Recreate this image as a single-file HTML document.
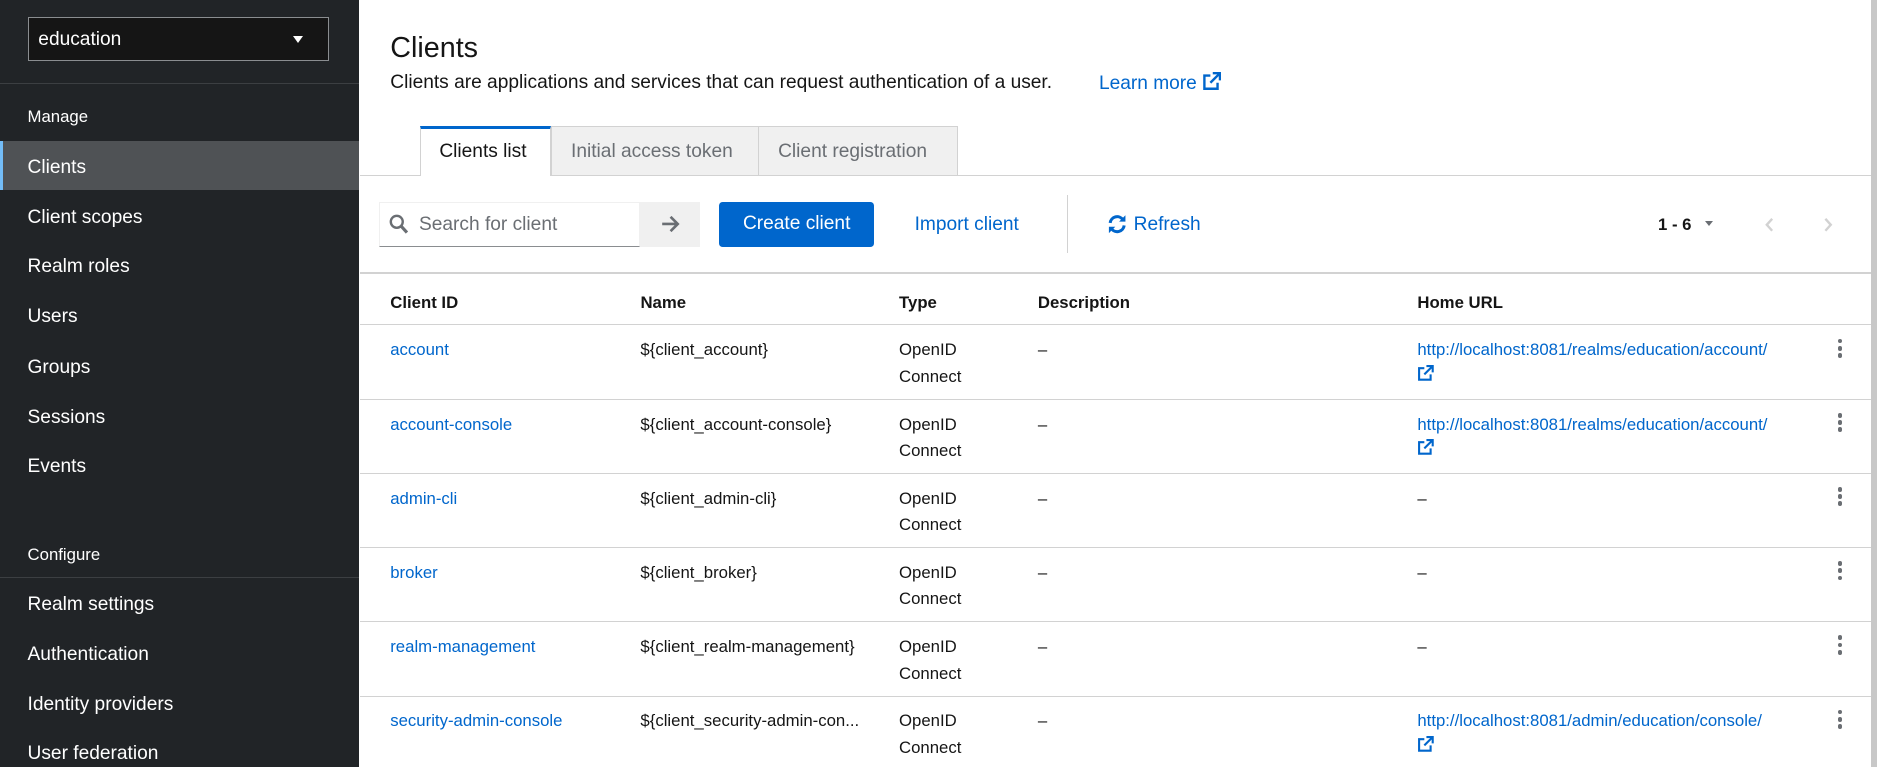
<!DOCTYPE html>
<html><head><meta charset="utf-8"><style>
*{box-sizing:border-box;margin:0;padding:0}
html,body{width:1877px;height:767px;overflow:hidden;background:#fff}
#w{zoom:1.1971;width:1568px;height:641px;position:relative;font-family:"Liberation Sans",sans-serif;color:#151515}
.a{position:absolute;white-space:nowrap}
#sb{position:absolute;left:0;top:0;width:300px;height:641px;background:#212427;color:#fff}
.ni{position:absolute;left:23px;font-size:16px;line-height:20px}
.blue{color:#0066cc}
.t14{font-size:14px}
.row{position:absolute;left:301px;width:1262px;height:62px;border-top:1px solid #d2d2d2}
.row .a{font-size:14px;line-height:22px}
.keb{position:absolute;left:1234px;top:11px;width:4px}
.keb i{display:block;width:4px;height:4px;border-radius:2px;background:#6a6e73;margin-bottom:2px}
</style></head><body><div id="w">
<div id="sb">
 <div class="a" style="left:23px;top:14px;width:252px;height:37px;background:#151515;border:1px solid #8a8d90"></div>
 <div class="a" style="left:32px;top:24px;font-size:16px">education</div>
 <div class="a" style="left:245px;top:30px;width:0;height:0;border-left:5px solid transparent;border-right:5px solid transparent;border-top:6px solid #fff"></div>
 <div class="a" style="left:0;top:69px;width:300px;height:1px;background:#3c3f42"></div>
 <div class="ni" style="top:88px;font-size:14px">Manage</div>
 <div class="a" style="left:0;top:118px;width:300px;height:41px;background:#4f5255;border-left:3px solid #73bcf7"></div>
 <div class="ni" style="top:130px">Clients</div>
 <div class="ni" style="top:172px">Client scopes</div>
 <div class="ni" style="top:213px">Realm roles</div>
 <div class="ni" style="top:255px">Users</div>
 <div class="ni" style="top:297px">Groups</div>
 <div class="ni" style="top:339px">Sessions</div>
 <div class="ni" style="top:380px">Events</div>
 <div class="ni" style="top:454px;font-size:14px">Configure</div>
 <div class="a" style="left:0;top:482px;width:300px;height:1px;background:#3c3f42"></div>
 <div class="ni" style="top:495px">Realm settings</div>
 <div class="ni" style="top:537px">Authentication</div>
 <div class="ni" style="top:579px">Identity providers</div>
 <div class="ni" style="top:620px">User federation</div>
</div>
<div class="a" style="left:1563px;top:0;width:5px;height:641px;background:#c8c8c8"></div>
<div class="a" style="left:326px;top:27px;font-size:24px">Clients</div>
<div class="a" style="left:326px;top:60px;font-size:16px">Clients are applications and services that can request authentication of a user.</div>
<div class="a blue" style="left:918px;top:60px;font-size:16px">Learn more <svg width="16" height="16" viewBox="0 0 16 16" style="vertical-align:-2px"><path d="M7 3H2v11h11V9" fill="none" stroke="#06c" stroke-width="2"/><path d="M9 1h6v6M15 1 7 9" fill="none" stroke="#06c" stroke-width="2"/></svg></div>
<div class="a" style="left:301px;top:146px;width:1262px;height:1px;background:#d2d2d2"></div>
<div class="a" style="left:351px;top:105px;width:109px;height:42px;background:#fff;border-top:3px solid #0066cc;border-left:1px solid #d2d2d2;border-right:1px solid #d2d2d2"></div>
<div class="a" style="left:367px;top:118px;font-size:16px">Clients list</div>
<div class="a" style="left:460px;top:105px;width:340px;height:41px;background:#f0f0f0;border:1px solid #d2d2d2;border-bottom:0"></div>
<div class="a" style="left:633px;top:105px;width:1px;height:41px;background:#d2d2d2"></div>
<div class="a" style="left:477px;top:118px;font-size:16px;color:#6a6e73">Initial access token</div>
<div class="a" style="left:650px;top:118px;font-size:16px;color:#6a6e73">Client registration</div>
<div class="a" style="left:317px;top:169px;width:218px;height:37px;border:1px solid #f0f0f0;border-bottom:1px solid #8a8d90"></div>
<svg class="a" style="left:325px;top:179px" width="16" height="17" viewBox="0 0 16 17"><circle cx="6.5" cy="6.5" r="5" fill="none" stroke="#6a6e73" stroke-width="2"/><path d="M10 10l5 5.5" stroke="#6a6e73" stroke-width="2.6"/></svg>
<div class="a" style="left:350px;top:179px;font-size:16px;color:#6a6e73">Search for client</div>
<div class="a" style="left:535px;top:169px;width:50px;height:37px;background:#f0f0f0"></div>
<svg class="a" style="left:552px;top:180px" width="16" height="15" viewBox="0 0 16 15"><path d="M1 7.5h13M8 1.5l6 6-6 6" fill="none" stroke="#6a6e73" stroke-width="2.2"/></svg>
<div class="a" style="left:601px;top:169px;width:129px;height:37px;background:#0066cc;border-radius:3px;color:#fff;font-size:16px;text-align:center;line-height:37px">Create client</div>
<div class="a blue" style="left:764px;top:179px;font-size:16px">Import client</div>
<div class="a" style="left:891px;top:163px;width:1px;height:48px;background:#d2d2d2"></div>
<svg class="a" style="left:925px;top:179px" width="17" height="17" viewBox="0 0 16 16"><path d="M2.5 7A5.5 5.5 0 0 1 12.5 4.5M13.5 9A5.5 5.5 0 0 1 3.5 11.5" fill="none" stroke="#06c" stroke-width="2.4"/><path d="M14.5 1v5h-5zM1.5 15v-5h5z" fill="#06c"/></svg>
<div class="a blue" style="left:947px;top:179px;font-size:16px">Refresh</div>
<div class="a" style="left:1385px;top:180px;font-size:14px;font-weight:bold">1 - 6</div>
<div class="a" style="left:1424px;top:185px;border-left:4px solid transparent;border-right:4px solid transparent;border-top:5px solid #6a6e73"></div>
<svg class="a" style="left:1474px;top:181px" width="8" height="13" viewBox="0 0 8 13"><path d="M6 1.5 1.5 6.5 6 11.5" fill="none" stroke="#d2d2d2" stroke-width="2"/></svg>
<svg class="a" style="left:1523px;top:181px" width="8" height="13" viewBox="0 0 8 13"><path d="M2 1.5 6.5 6.5 2 11.5" fill="none" stroke="#d2d2d2" stroke-width="2"/></svg>
<div class="a" style="left:301px;top:227px;width:1262px;height:2px;background:#d2d2d2"></div>
<div class="a t14" style="left:326px;top:245px;font-weight:bold">Client ID</div>
<div class="a t14" style="left:535px;top:245px;font-weight:bold">Name</div>
<div class="a t14" style="left:751px;top:245px;font-weight:bold">Type</div>
<div class="a t14" style="left:867px;top:245px;font-weight:bold">Description</div>
<div class="a t14" style="left:1184px;top:245px;font-weight:bold">Home URL</div>

<div class="row" style="top:271px"><div class="a blue" style="left:25px;top:10px">account</div><div class="a" style="left:234px;top:10px">${client_account}</div><div class="a" style="left:450px;top:10px">OpenID<br>Connect</div><div class="a" style="left:566px;top:10px">–</div><div class="a blue" style="left:883px;top:10px">http://localhost:8081/realms/education/account/<br><svg width="14" height="14" viewBox="0 0 16 16"><path d="M7 3H2v11h11V9" fill="none" stroke="#06c" stroke-width="2"/><path d="M9 1h6v6M15 1 7 9" fill="none" stroke="#06c" stroke-width="2"/></svg></div><div class="keb"><i></i><i></i><i></i></div></div>
<div class="row" style="top:333px"><div class="a blue" style="left:25px;top:10px">account-console</div><div class="a" style="left:234px;top:10px">${client_account-console}</div><div class="a" style="left:450px;top:10px">OpenID<br>Connect</div><div class="a" style="left:566px;top:10px">–</div><div class="a blue" style="left:883px;top:10px">http://localhost:8081/realms/education/account/<br><svg width="14" height="14" viewBox="0 0 16 16"><path d="M7 3H2v11h11V9" fill="none" stroke="#06c" stroke-width="2"/><path d="M9 1h6v6M15 1 7 9" fill="none" stroke="#06c" stroke-width="2"/></svg></div><div class="keb"><i></i><i></i><i></i></div></div>
<div class="row" style="top:395px"><div class="a blue" style="left:25px;top:10px">admin-cli</div><div class="a" style="left:234px;top:10px">${client_admin-cli}</div><div class="a" style="left:450px;top:10px">OpenID<br>Connect</div><div class="a" style="left:566px;top:10px">–</div><div class="a" style="left:883px;top:10px">–</div><div class="keb"><i></i><i></i><i></i></div></div>
<div class="row" style="top:457px"><div class="a blue" style="left:25px;top:10px">broker</div><div class="a" style="left:234px;top:10px">${client_broker}</div><div class="a" style="left:450px;top:10px">OpenID<br>Connect</div><div class="a" style="left:566px;top:10px">–</div><div class="a" style="left:883px;top:10px">–</div><div class="keb"><i></i><i></i><i></i></div></div>
<div class="row" style="top:519px"><div class="a blue" style="left:25px;top:10px">realm-management</div><div class="a" style="left:234px;top:10px">${client_realm-management}</div><div class="a" style="left:450px;top:10px">OpenID<br>Connect</div><div class="a" style="left:566px;top:10px">–</div><div class="a" style="left:883px;top:10px">–</div><div class="keb"><i></i><i></i><i></i></div></div>
<div class="row" style="top:581px"><div class="a blue" style="left:25px;top:10px">security-admin-console</div><div class="a" style="left:234px;top:10px">${client_security-admin-con...</div><div class="a" style="left:450px;top:10px">OpenID<br>Connect</div><div class="a" style="left:566px;top:10px">–</div><div class="a blue" style="left:883px;top:10px">http://localhost:8081/admin/education/console/<br><svg width="14" height="14" viewBox="0 0 16 16"><path d="M7 3H2v11h11V9" fill="none" stroke="#06c" stroke-width="2"/><path d="M9 1h6v6M15 1 7 9" fill="none" stroke="#06c" stroke-width="2"/></svg></div><div class="keb"><i></i><i></i><i></i></div></div>
</div></body></html>
